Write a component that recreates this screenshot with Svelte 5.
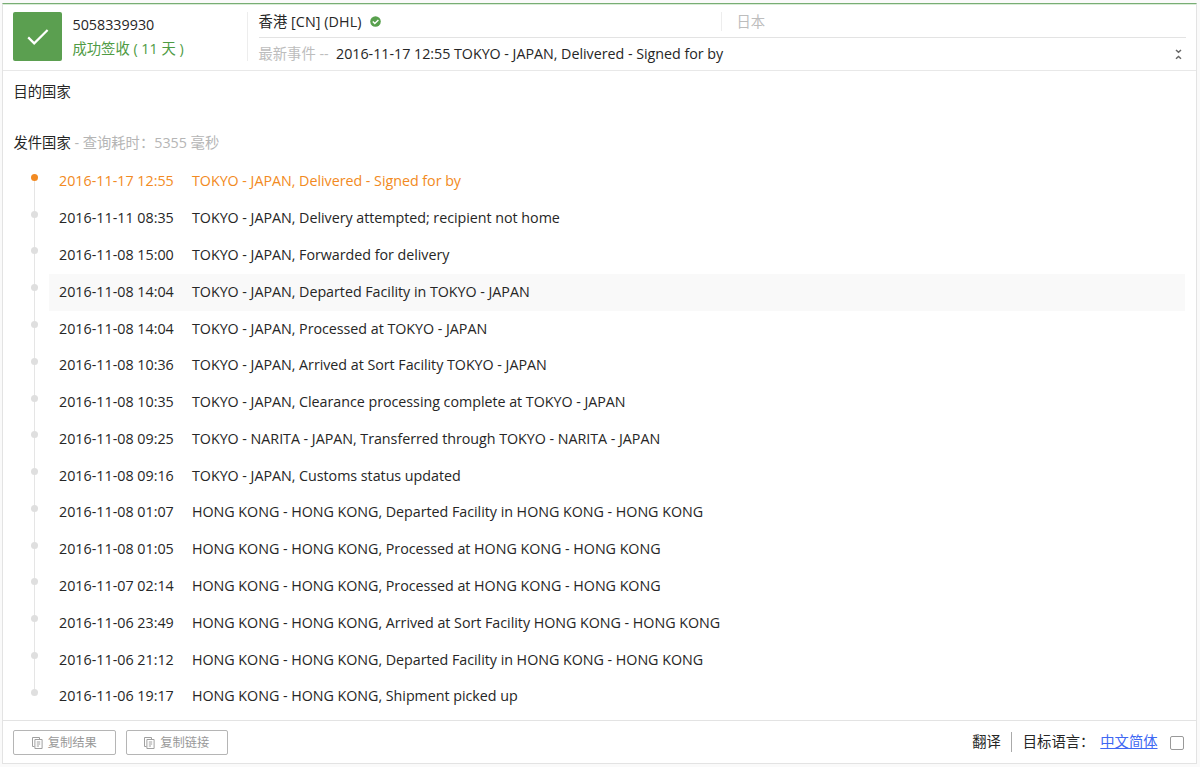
<script lang="ts">
  interface TrackEvent {
    time: string;
    text: string;
  }

  const trackingNumber = '5058339930';
  const hovered = 3;

  const events: TrackEvent[] = [
    { time: '2016-11-17 12:55', text: 'TOKYO - JAPAN, Delivered - Signed for by' },
    { time: '2016-11-11 08:35', text: 'TOKYO - JAPAN, Delivery attempted; recipient not home' },
    { time: '2016-11-08 15:00', text: 'TOKYO - JAPAN, Forwarded for delivery' },
    { time: '2016-11-08 14:04', text: 'TOKYO - JAPAN, Departed Facility in TOKYO - JAPAN' },
    { time: '2016-11-08 14:04', text: 'TOKYO - JAPAN, Processed at TOKYO - JAPAN' },
    { time: '2016-11-08 10:36', text: 'TOKYO - JAPAN, Arrived at Sort Facility TOKYO - JAPAN' },
    { time: '2016-11-08 10:35', text: 'TOKYO - JAPAN, Clearance processing complete at TOKYO - JAPAN' },
    { time: '2016-11-08 09:25', text: 'TOKYO - NARITA - JAPAN, Transferred through TOKYO - NARITA - JAPAN' },
    { time: '2016-11-08 09:16', text: 'TOKYO - JAPAN, Customs status updated' },
    { time: '2016-11-08 01:07', text: 'HONG KONG - HONG KONG, Departed Facility in HONG KONG - HONG KONG' },
    { time: '2016-11-08 01:05', text: 'HONG KONG - HONG KONG, Processed at HONG KONG - HONG KONG' },
    { time: '2016-11-07 02:14', text: 'HONG KONG - HONG KONG, Processed at HONG KONG - HONG KONG' },
    { time: '2016-11-06 23:49', text: 'HONG KONG - HONG KONG, Arrived at Sort Facility HONG KONG - HONG KONG' },
    { time: '2016-11-06 21:12', text: 'HONG KONG - HONG KONG, Departed Facility in HONG KONG - HONG KONG' },
    { time: '2016-11-06 19:17', text: 'HONG KONG - HONG KONG, Shipment picked up' }
  ];

  const actions = ['复制结果', '复制链接'];
  const latest = events[0];
</script>

<div class="card">
  <header class="header">
    <div class="status-icon">
      <svg width="49" height="49" viewBox="0 0 49 49" fill="none" stroke="#fff" stroke-width="2.2">
        <path d="M15.2 25.4l6 6L34.6 18" />
      </svg>
    </div>
    <div class="summary">
      <div class="number">{trackingNumber}</div>
      <div class="status">成功签收 ( 11 天 )</div>
    </div>
    <div class="route">
      <div class="countries">
        <div class="origin">
          <span>香港 [CN] (DHL)</span>
          <svg width="11" height="11" viewBox="0 0 11 11">
            <circle cx="5.5" cy="5.5" r="5.3" fill="#58a04d" />
            <path d="M2.8 5.6l2 2L8.4 4" fill="none" stroke="#fff" stroke-width="1.4" />
          </svg>
        </div>
        <div class="destination">日本</div>
      </div>
      <div class="latest">
        <span class="latest-label">最新事件 --</span>
        <span class="latest-text">{latest.time} {latest.text}</span>
        <svg class="collapse" width="7" height="11" viewBox="0 0 7 11" fill="none" stroke="#666" stroke-width="1.5">
          <path d="M1 1l2.5 2.3L6 1M1 9.8l2.5-2.3L6 9.8" />
        </svg>
      </div>
    </div>
  </header>

  <main class="body">
    <div class="section">目的国家</div>
    <div class="section origin-section">
      发件国家 <span class="muted">- 查询耗时：5355 毫秒</span>
    </div>
    <ul class="events">
      {#each events as event, i}
        <li class="event" class:active={i === 0}>
          <div class="rail"><i class="dot"></i></div>
          <div class="row" class:hovered={i === hovered}>
            <time>{event.time}</time>
            <span class="event-text">{event.text}</span>
          </div>
        </li>
      {/each}
    </ul>
  </main>

  <footer class="footer">
    {#each actions as action}
      <button class="copy-btn">
        <svg width="11" height="12" viewBox="0 0 11 12" fill="none" stroke="#a0a0a0">
          <path d="M2.5 9.5h-2v-9h7v1.5M2.9 2.5h7.2v9H2.9zM4.8 5h3.4M4.8 7h3.4M4.8 9h2.2" />
        </svg>
        <span>{action}</span>
      </button>
    {/each}
    <div class="translate">
      <span class="translate-label">翻译</span>
      <span>目标语言：</span>
      <a class="language" href="#lang">中文简体</a>
      <span class="checkbox"></span>
    </div>
  </footer>
</div>

<style>
  :global(body) {
    margin: 0;
    background: #fafafa;
  }

  .card {
    box-sizing: border-box;
    width: 1195px;
    height: 761px;
    margin: 3px 0 0 2px;
    border: 1px solid #e3e3e3;
    border-top: 1px solid #78ad74;
    background: #fff;
    color: #262626;
    font-family: 'Open Sans', 'Noto Sans CJK SC', sans-serif;
    font-size: 14.3px;
    line-height: 24px;
    white-space: nowrap;
    display: flex;
    flex-direction: column;
  }

  .header {
    box-sizing: border-box;
    height: 67px;
    flex-shrink: 0;
    display: flex;
    padding: 7px 10px 0;
    border-top: 1px solid #d9ecd7;
    border-bottom: 1px solid #e8e8e8;
  }

  .status-icon {
    width: 49px;
    height: 49px;
    border-radius: 2px;
    background: #5b9f50;
  }

  .status-icon svg {
    display: block;
  }

  .summary {
    width: 174px;
    padding-left: 10.5px;
  }

  .number {
    height: 24px;
    padding-top: 1px;
  }

  .status {
    color: #4f9b44;
  }

  .route {
    flex: 1;
    height: 49px;
    padding-left: 11px;
    border-left: 1px solid #ededed;
  }

  .countries {
    height: 25px;
    line-height: 20px;
    display: flex;
    border-bottom: 1px solid #e3e3e3;
  }

  .origin {
    width: 462px;
    display: flex;
    align-items: center;
    gap: 8px;
    height: 19px;
    letter-spacing: 0.08px;
  }

  .destination {
    height: 19px;
    padding-left: 15px;
    border-left: 1px solid #ededed;
    color: #bdbdbd;
  }

  .latest {
    display: flex;
    align-items: center;
    padding-top: 4px;
  }

  .latest-label {
    width: 77.5px;
    color: #bdbdbd;
  }

  .latest-text {
    letter-spacing: -0.03px;
  }

  .collapse {
    margin-left: auto;
    margin-right: 4px;
  }

  .body {
    box-sizing: border-box;
    height: 649px;
    padding: 9px 11px 0 10.5px;
  }

  .section {
    height: 24px;
  }

  .origin-section {
    margin-top: 27px;
  }

  .muted {
    color: #b5b5b5;
  }

  .events {
    list-style: none;
    margin: 8.4px 0 0;
    padding: 0;
  }

  .event {
    height: 36.79px;
    display: flex;
  }

  .rail {
    width: 35.5px;
    padding-left: 16px;
    box-sizing: border-box;
    background: linear-gradient(#e5e5e5, #e5e5e5) 20px 0 / 1px 100% no-repeat;
  }

  .event:first-child .rail {
    background-position: 20px 14px;
  }

  .event:last-child .rail {
    background-size: 1px 14px;
  }

  .dot {
    display: block;
    width: 7px;
    height: 7px;
    margin: 10.5px 0 0 1px;
    border-radius: 50%;
    background: #dfdfdf;
  }

  .row {
    flex: 1;
    display: flex;
    padding-left: 10px;
    line-height: 36.8px;
  }

  .row.hovered {
    background: #f9f9f9;
  }

  .row time {
    width: 133px;
  }

  .event-text {
    letter-spacing: -0.035px;
  }

  .active {
    color: #f28a22;
  }

  .active .dot {
    background: #f28a22;
  }

  .footer {
    flex: 1;
    display: flex;
    align-items: center;
    gap: 10px;
    padding: 0 12px 0 10px;
    border-top: 1px solid #e3e3e3;
  }

  .copy-btn {
    box-sizing: border-box;
    width: 102.5px;
    height: 25px;
    padding: 1px 0 0;
    border: 1px solid #b5b5b5;
    border-radius: 2px;
    background: #fff;
    color: #999;
    font: inherit;
    font-size: 12.3px;
    display: flex;
    align-items: center;
    justify-content: center;
    gap: 5px;
  }

  .translate {
    margin-left: auto;
    display: flex;
    align-items: center;
  }

  .translate-label {
    height: 20px;
    line-height: 20px;
    padding-right: 10px;
    margin-right: 11px;
    border-right: 1px solid #aaa;
  }

  .language {
    color: #4068f3;
    margin-left: 6px;
    text-decoration: underline;
  }

  .checkbox {
    box-sizing: border-box;
    width: 14px;
    height: 14px;
    margin: 2px 0 0 12.5px;
    border: 1px solid #999;
    border-radius: 2px;
  }
</style>
